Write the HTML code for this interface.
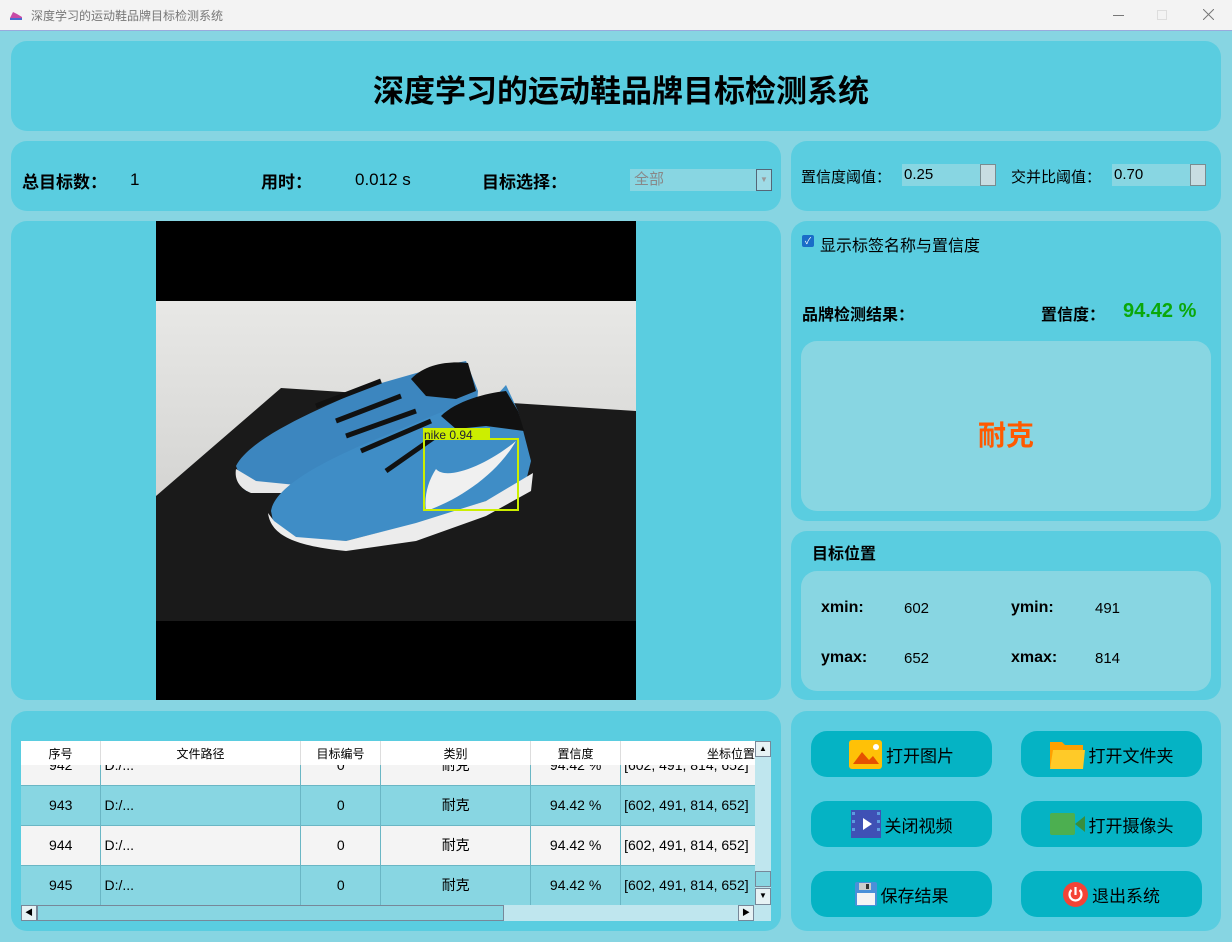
<!DOCTYPE html>
<html><head><meta charset="utf-8"><style>
*{margin:0;padding:0;box-sizing:border-box}
body{width:1232px;height:942px;position:relative;overflow:hidden;background:#87d5e2;font-family:"Liberation Sans","Noto Sans CJK SC",sans-serif;color:#000}
.a{position:absolute}
.p{position:absolute;background:#5acde0;border-radius:16px}
.in{position:absolute;background:#88d6e2;border-radius:16px}
.b{font-weight:bold}
.btn{position:absolute;background:#05b3c4;border-radius:16px;width:181px;height:46px;font-size:17px;display:flex;align-items:center;justify-content:center;gap:4px}
table{border-collapse:collapse;font-size:14px}
td{height:40px;text-align:center;border-right:1px solid #6ab6c4;border-bottom:1px solid #6ab6c4}
.spin{position:absolute;width:16px;height:22px;background:#c8dde2;border:1px solid #7a8c90}
</style></head><body>
<div class="a" style="left:0;top:0;width:1232px;height:31px;background:#f3f3f3;border-bottom:1px solid #9ad"></div>
<svg class="a" style="left:9px;top:9px" width="14" height="12"><path d="M1 9 L4 3 L8 5 L13 8 L13 11 L1 11Z" fill="#c84aa6"/><path d="M1 10h12" stroke="#4a6ad0" stroke-width="2"/></svg>
<div class="a" style="left:31px;top:7px;font-size:12px;color:#777">深度学习的运动鞋品牌目标检测系统</div>
<div class="a" style="left:1113px;top:15px;width:11px;height:1px;background:#777"></div>
<div class="a" style="left:1157px;top:10px;width:10px;height:10px;border:1px solid #ddd"></div>
<svg class="a" style="left:1203px;top:9px" width="11" height="11"><path d="M0 0L11 11M11 0L0 11" stroke="#777" stroke-width="1"/></svg>

<div class="p" style="left:11px;top:41px;width:1210px;height:90px"></div>
<div class="a b" style="left:0;width:1242px;top:66px;text-align:center;font-size:31px">深度学习的运动鞋品牌目标检测系统</div>

<div class="p" style="left:11px;top:141px;width:770px;height:70px"></div>
<div class="a b" style="left:22px;top:168px;font-size:17px">总目标数：</div>
<div class="a" style="left:130px;top:170px;font-size:17px">1</div>
<div class="a b" style="left:261px;top:168px;font-size:17px">用时：</div>
<div class="a" style="left:355px;top:170px;font-size:17px">0.012 s</div>
<div class="a b" style="left:482px;top:168px;font-size:17px">目标选择：</div>
<div class="a" style="left:630px;top:169px;width:126px;height:22px;background:#88d6e2;color:#888;font-size:15px;padding-left:4px;line-height:22px">全部</div>
<div class="a" style="left:756px;top:169px;width:16px;height:22px;background:#9fdbe6;border:1px solid #567;color:#999;font-size:8px;text-align:center;line-height:20px">▼</div>

<div class="p" style="left:791px;top:141px;width:430px;height:70px"></div>
<div class="a" style="left:801px;top:166px;font-size:15px">置信度阈值：</div>
<div class="a" style="left:902px;top:164px;width:78px;height:22px;background:#88d6e2;font-size:15px;padding-left:2px;line-height:22px">0.25</div>
<div class="spin" style="left:980px;top:164px"></div>
<div class="a" style="left:1011px;top:166px;font-size:15px">交并比阈值：</div>
<div class="a" style="left:1112px;top:164px;width:78px;height:22px;background:#88d6e2;font-size:15px;padding-left:2px;line-height:22px">0.70</div>
<div class="spin" style="left:1190px;top:164px"></div>

<div class="p" style="left:11px;top:221px;width:770px;height:479px"></div>
<div class="a" style="left:156px;top:221px;width:480px;height:479px;background:#000"></div>
<svg class="a" style="left:156px;top:301px" width="480" height="320" viewBox="0 0 480 320">
<defs><linearGradient id="w" x1="0" y1="0" x2="0" y2="1"><stop offset="0" stop-color="#e8e8e6"/><stop offset="1" stop-color="#c8c8c6"/></linearGradient></defs>
<rect width="480" height="320" fill="url(#w)"/>
<path d="M0 195 L125 87 L480 110 L480 320 L0 320Z" fill="#1a1a1a"/>
<path d="M80 165 C95 135 170 105 215 85 L285 65 L310 60 L322 90 L320 115 L250 145 L190 175 L130 190 L90 190Z" fill="#3c86bf"/>
<path d="M80 168 C78 180 85 188 95 192 L140 192 L150 185 L100 180Z" fill="#e8e8e8"/>
<path d="M255 78 C270 62 295 60 312 62 L320 90 L300 98 L270 95Z" fill="#111"/>
<path d="M115 210 C120 180 190 150 240 130 L300 105 L340 95 L350 84 L362 110 L375 160 L370 180 L330 200 L270 220 L190 240 L140 238 L118 225Z" fill="#3f8dc6"/>
<path d="M285 115 C300 100 330 92 350 90 L362 110 L368 130 L330 125 L300 128Z" fill="#111"/>
<path d="M112 212 C115 235 140 245 190 250 L260 240 L330 215 L375 190 L377 172 L330 200 L260 222 L190 240 L140 236 L118 220Z" fill="#ececec"/>
<path d="M180 120 L245 95 M190 135 L260 110 M205 150 L275 120 M160 105 L225 80 M230 170 L280 135" stroke="#111" stroke-width="5"/>
<path d="M270 210 C300 200 340 175 360 140 C330 165 290 180 280 168 C272 180 268 195 270 210Z" fill="#f0f0f0"/>
<rect x="268" y="138" width="94" height="71" fill="none" stroke="#ccee00" stroke-width="2"/>
<rect x="267" y="127" width="67" height="12" fill="#ccee00"/>
<text x="268" y="138" font-size="12" fill="#223" font-family="Liberation Sans">nike  0.94</text>
</svg>

<div class="p" style="left:791px;top:221px;width:430px;height:300px"></div>
<div class="a" style="left:802px;top:235px;width:12px;height:12px;background:#1a6cc8;border-radius:2px;color:#fff;font-size:9px;text-align:center;line-height:12px">✓</div>
<div class="a" style="left:820px;top:232px;font-size:16px">显示标签名称与置信度</div>
<div class="a b" style="left:802px;top:301px;font-size:16px">品牌检测结果：</div>
<div class="a b" style="left:1041px;top:301px;font-size:16px">置信度：</div>
<div class="a b" style="left:1123px;top:300px;font-size:20px;color:#0aa80a">94.42 %</div>
<div class="in" style="left:801px;top:341px;width:410px;height:170px"></div>
<div class="a b" style="left:801px;width:410px;top:414px;text-align:center;font-size:28px;color:#ff5a00">耐克</div>

<div class="p" style="left:791px;top:531px;width:430px;height:169px"></div>
<div class="a b" style="left:812px;top:540px;font-size:16px">目标位置</div>
<div class="in" style="left:801px;top:571px;width:410px;height:120px"></div>
<div class="a b" style="left:821px;top:599px;font-size:16px">xmin:</div>
<div class="a" style="left:904px;top:600px;font-size:15px">602</div>
<div class="a b" style="left:1011px;top:599px;font-size:16px">ymin:</div>
<div class="a" style="left:1095px;top:600px;font-size:15px">491</div>
<div class="a b" style="left:821px;top:649px;font-size:16px">ymax:</div>
<div class="a" style="left:904px;top:650px;font-size:15px">652</div>
<div class="a b" style="left:1011px;top:649px;font-size:16px">xmax:</div>
<div class="a" style="left:1095px;top:650px;font-size:15px">814</div>

<div class="p" style="left:11px;top:711px;width:770px;height:220px"></div>
<div class="a" style="left:21px;top:741px;width:734px;height:164px;overflow:hidden;background:#f4f4f4">
<table style="position:absolute;top:4px;left:0;width:780px">
<colgroup><col style="width:80px"><col style="width:200px"><col style="width:80px"><col style="width:150px"><col style="width:90px"><col style="width:180px"></colgroup>
<tr style="background:#f4f4f4"><td>942</td><td style="text-align:left;padding-left:3px">D:/...</td><td>0</td><td>耐克</td><td>94.42 %</td><td style="text-align:left;padding-left:3px">[602, 491, 814, 652]</td></tr>
<tr style="background:#88d6e2"><td>943</td><td style="text-align:left;padding-left:3px">D:/...</td><td>0</td><td>耐克</td><td>94.42 %</td><td style="text-align:left;padding-left:3px">[602, 491, 814, 652]</td></tr>
<tr style="background:#f4f4f4"><td>944</td><td style="text-align:left;padding-left:3px">D:/...</td><td>0</td><td>耐克</td><td>94.42 %</td><td style="text-align:left;padding-left:3px">[602, 491, 814, 652]</td></tr>
<tr style="background:#88d6e2"><td>945</td><td style="text-align:left;padding-left:3px">D:/...</td><td>0</td><td>耐克</td><td>94.42 %</td><td style="text-align:left;padding-left:3px">[602, 491, 814, 652]</td></tr>
</table>
<div class="a" style="left:0;top:0;width:734px;height:24px;background:#fff;font-size:12px;display:flex;line-height:26px">
<div style="width:80px;text-align:center;border-right:1px solid #ddd">序号</div><div style="width:200px;text-align:center;border-right:1px solid #ddd">文件路径</div><div style="width:80px;text-align:center;border-right:1px solid #ddd">目标编号</div><div style="width:150px;text-align:center;border-right:1px solid #ddd">类别</div><div style="width:90px;text-align:center;border-right:1px solid #ddd">置信度</div><div style="width:134px;text-align:right">坐标位置</div></div>
</div>
<div class="a" style="left:755px;top:741px;width:16px;height:164px;background:#bfe6ee"></div>
<div class="a" style="left:755px;top:741px;width:16px;height:16px;background:#e6f2f4;border:1px solid #789;font-size:8px;text-align:center;line-height:14px">▲</div>
<div class="a" style="left:755px;top:871px;width:16px;height:16px;background:#88d6e2;border:1px solid #789"></div>
<div class="a" style="left:755px;top:888px;width:16px;height:17px;background:#e6f2f4;border:1px solid #789;font-size:8px;text-align:center;line-height:14px">▼</div>
<div class="a" style="left:21px;top:905px;width:750px;height:16px;background:#bfe6ee"></div>
<div class="a" style="left:21px;top:905px;width:16px;height:16px;background:#e6f2f4;border:1px solid #789;font-size:8px;text-align:center;line-height:14px">◀</div>
<div class="a" style="left:37px;top:905px;width:467px;height:16px;background:#88d6e2;border:1px solid #789"></div>
<div class="a" style="left:738px;top:905px;width:16px;height:16px;background:#e6f2f4;border:1px solid #789;font-size:8px;text-align:center;line-height:14px">▶</div>

<div class="p" style="left:791px;top:711px;width:430px;height:220px"></div>
<div class="btn" style="left:811px;top:731px"><svg width="33" height="29"><rect width="33" height="29" rx="3" fill="#ffc107"/><path d="M4 24 L13 12 L20 20 L24 16 L30 24Z" fill="#e65100"/><circle cx="27" cy="7" r="3" fill="#fff"/></svg>打开图片</div>
<div class="btn" style="left:1021px;top:731px"><svg width="35" height="29"><path d="M0 2 h12 l3 3 h18 v22 h-33z" fill="#ffa000"/><path d="M3 10 h32 l-2 19 h-33z" fill="#ffca28"/></svg>打开文件夹</div>
<div class="btn" style="left:811px;top:801px"><svg width="30" height="28"><rect width="30" height="28" fill="#3f51b5"/><path d="M12 8 L21 14 L12 20Z" fill="#fff"/><g fill="#5c9ce0"><rect x="1" y="2" width="3" height="3"/><rect x="1" y="10" width="3" height="3"/><rect x="1" y="18" width="3" height="3"/><rect x="26" y="2" width="3" height="3"/><rect x="26" y="10" width="3" height="3"/><rect x="26" y="18" width="3" height="3"/></g></svg>关闭视频</div>
<div class="btn" style="left:1021px;top:801px"><svg width="35" height="22"><rect width="25" height="22" rx="2" fill="#4caf50"/><path d="M25 11 L35 3 V19Z" fill="#388e3c"/></svg>打开摄像头</div>
<div class="btn" style="left:811px;top:871px"><svg width="22" height="24"><rect width="22" height="24" rx="2" fill="#4a90d9"/><rect x="4" y="1" width="12" height="7" fill="#ccc"/><rect x="11" y="2" width="3" height="5" fill="#333"/><rect x="2" y="11" width="18" height="12" fill="#f4f4f4"/></svg>保存结果</div>
<div class="btn" style="left:1021px;top:871px"><svg width="25" height="25"><circle cx="12.5" cy="12.5" r="12.5" fill="#f44336"/><path d="M8.5 8 A6 6 0 1 0 16.5 8" fill="none" stroke="#fff" stroke-width="2.2"/><path d="M12.5 5v8" stroke="#fff" stroke-width="2.2"/></svg>退出系统</div>
</body></html>
